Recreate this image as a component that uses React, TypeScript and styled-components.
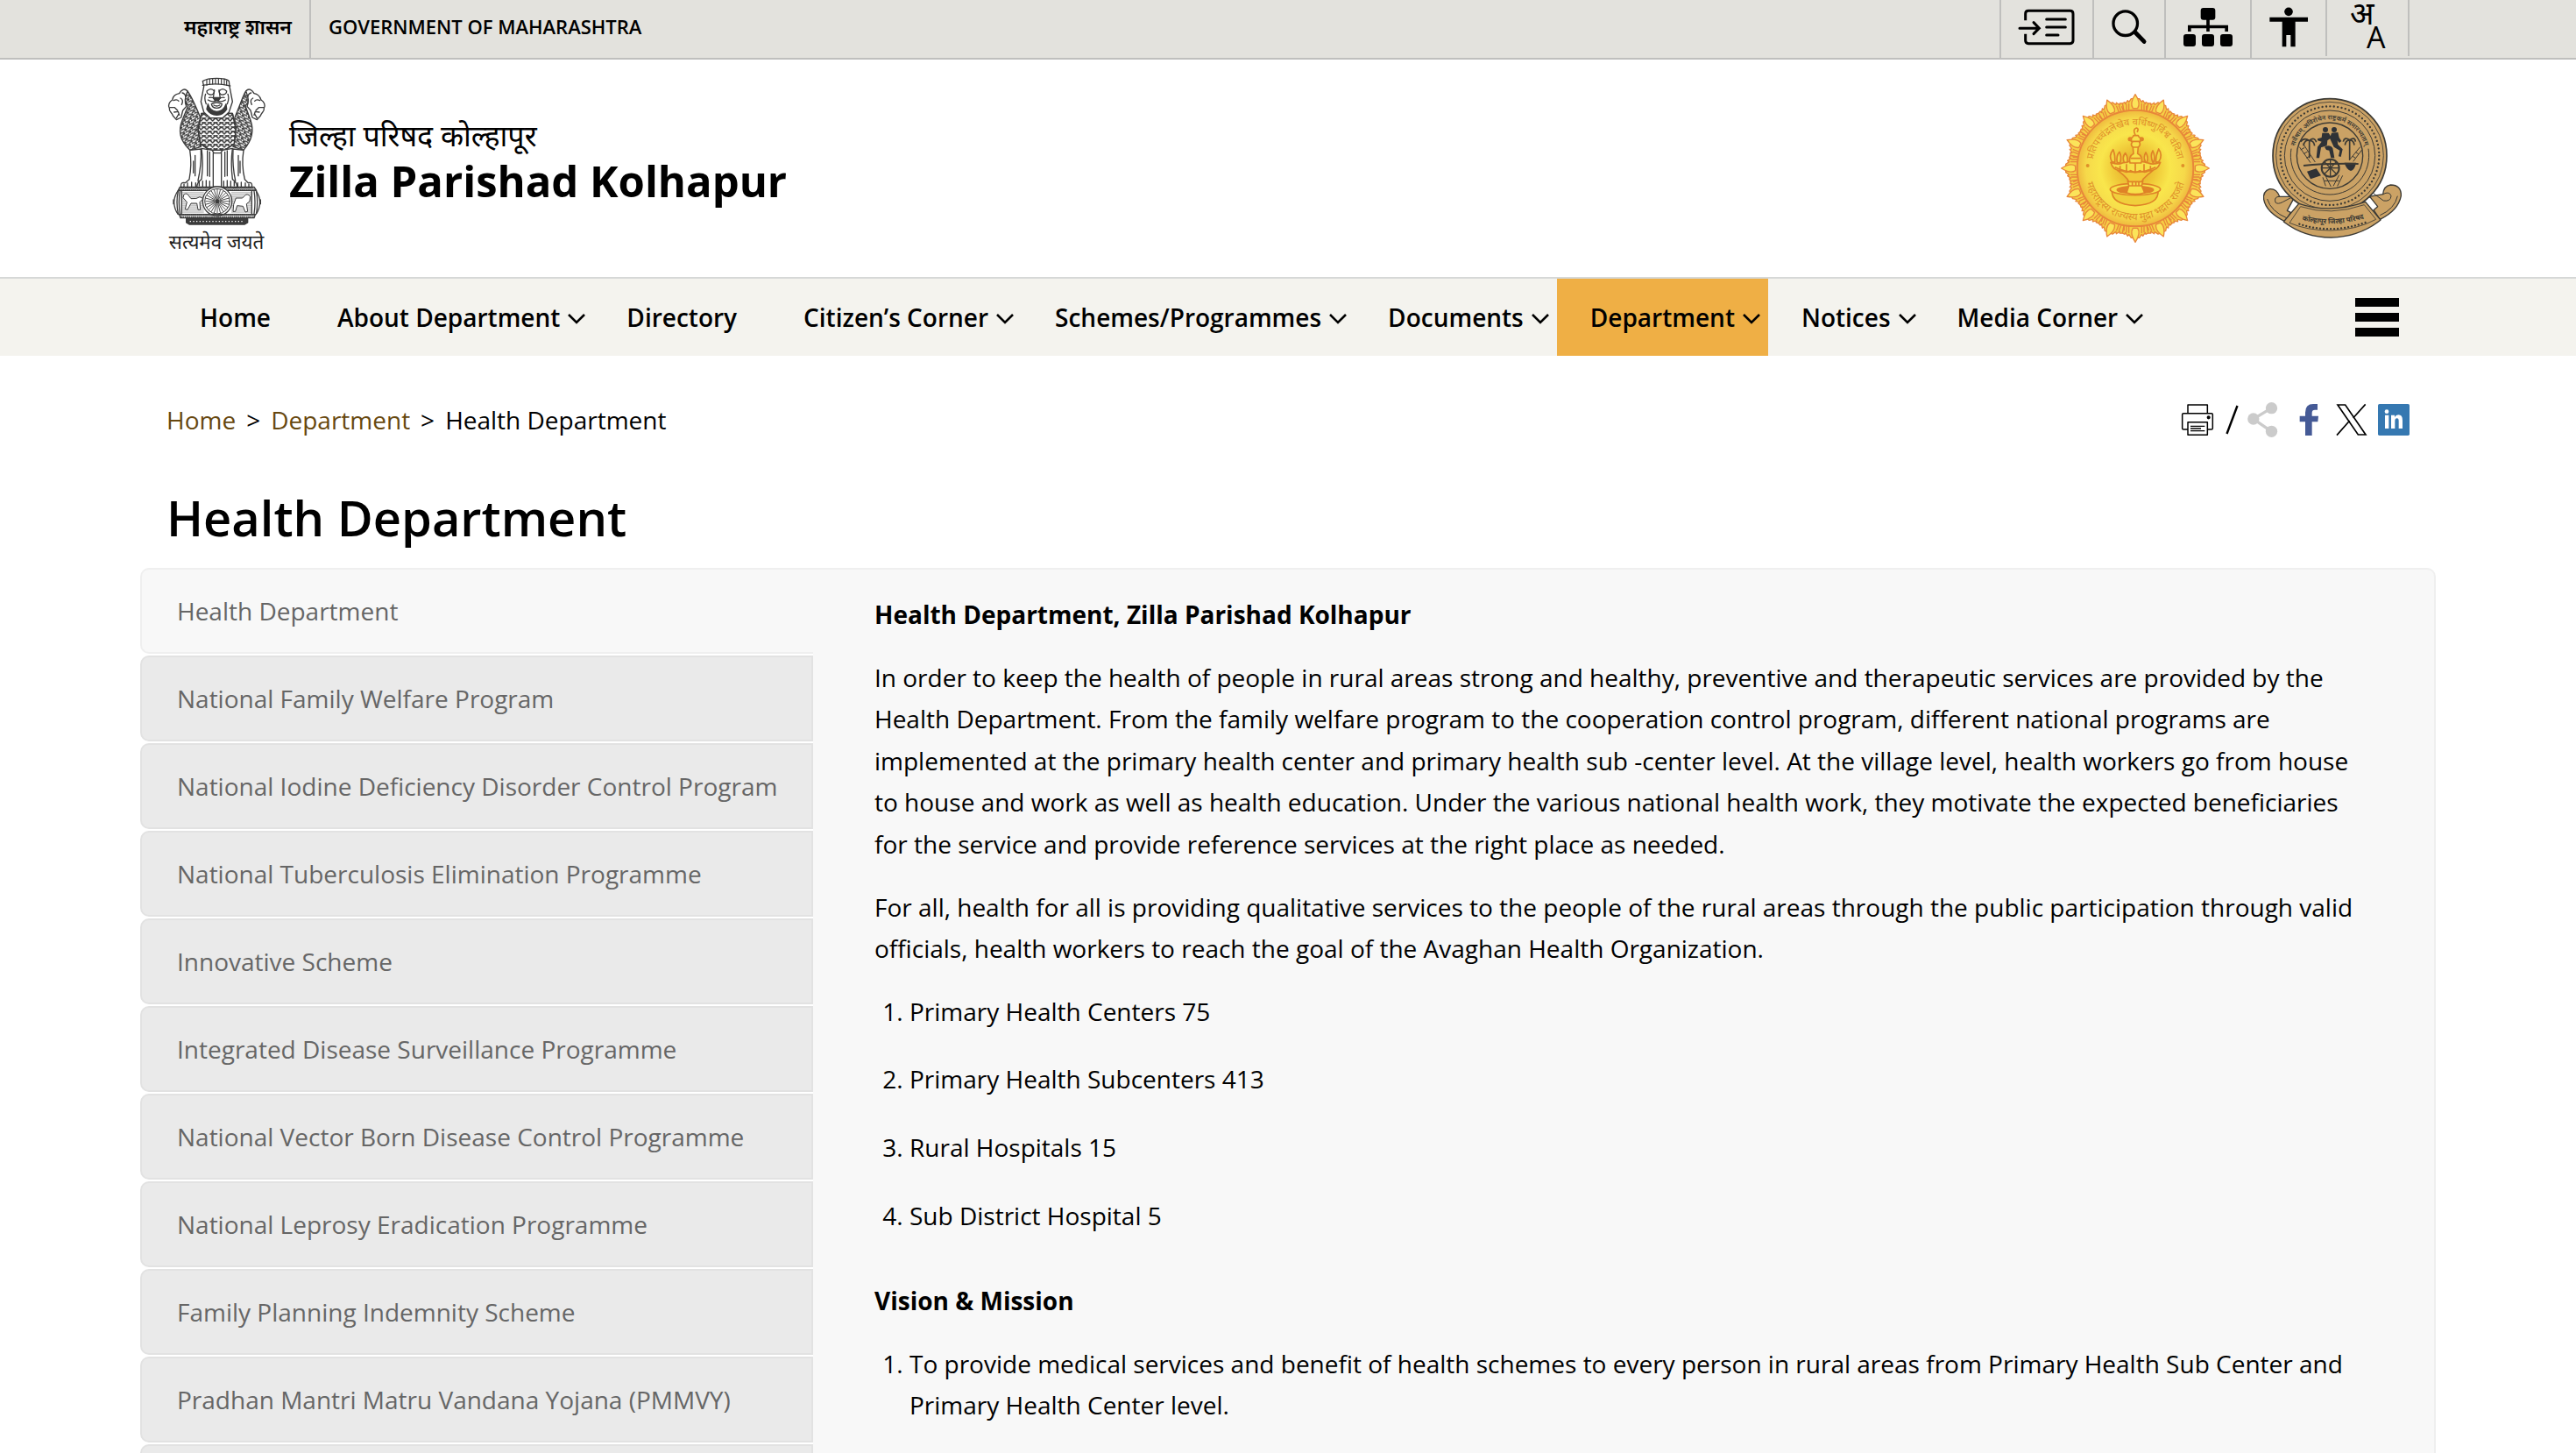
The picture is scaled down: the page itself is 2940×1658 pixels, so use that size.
import React from "react";
import styled, { createGlobalStyle, css } from "styled-components";

const GlobalStyle = createGlobalStyle`
  *, *::before, *::after { box-sizing: border-box; }
  body {
    margin: 0;
    background: #fff;
    color: #000;
    font-family: "Open Sans", "Noto Sans", sans-serif;
    font-size: 28px;
    line-height: 1.7;
  }
  a { color: inherit; text-decoration: none; }
  button { font: inherit; color: inherit; background: none; border: 0; padding: 0; cursor: pointer; }
  svg { display: block; flex: none; overflow: visible; }
`;

const Page = styled.div`
  height: 100vh;
  overflow: hidden;
`;

const Container = styled.div`
  width: 100%;
  max-width: 2620px;
  margin: 0 auto;
  padding: 0 30px;
`;

/* ---------- Top bar ---------- */

const TopBar = styled.div`
  background: #e3e2dd;
  border-bottom: 2px solid #bfbfbd;
`;

const TopRow = styled(Container)`
  display: flex;
  justify-content: space-between;
  align-items: flex-start;
`;

const TopLinks = styled.div`
  display: flex;
`;

const TopLink = styled.a`
  display: flex;
  align-items: center;
  height: 66px;
  padding: 0 20px 4px;
  font-size: 22px;
  font-weight: 600;
  &:lang(mr) { font-size: 23px; }
  & + & { border-left: 2px solid #bfbfbd; }
`;

const Tools = styled.div`
  display: flex;
`;

const Tool = styled.button<{ $short?: boolean }>`
  display: flex;
  align-items: center;
  height: ${(p) => (p.$short ? 64 : 66)}px;
  padding: 0 20px 4px;
  border-left: 2px solid #bfbfbd;
  ${(p) => p.$short && css`border-right: 2px solid #bfbfbd;`}
`;

/* ---------- Header ---------- */

const Header = styled.header`
  border-bottom: 2px solid #d6d8d7;
`;

const HeaderRow = styled(Container)`
  display: flex;
  justify-content: space-between;
  align-items: center;
  height: 248px;
`;

const Brand = styled.a`
  display: flex;
  align-items: center;
  gap: 26px;
  padding-bottom: 8px;
`;

const BrandText = styled.div`
  display: flex;
  flex-direction: column;
  padding-bottom: 12px;
`;

const BrandLocal = styled.span`
  font-size: 34px;
  line-height: 48px;
`;

const BrandName = styled.strong`
  font-size: 49px;
  line-height: 56px;
  font-weight: 700;
`;

const Seals = styled.div`
  display: flex;
  align-items: center;
  gap: 60px;
  padding-right: 8px;
`;

/* ---------- Main menu ---------- */

const MenuBar = styled.nav`
  background: #f4f3ee;
`;

const MenuRow = styled(Container)`
  display: flex;
  justify-content: space-between;
  align-items: center;
`;

const MenuList = styled.ul`
  display: flex;
  margin: 0;
  padding: 0;
  list-style: none;
`;

const MenuLink = styled.a<{ $active?: boolean; $drop?: boolean }>`
  display: flex;
  align-items: center;
  gap: 10px;
  height: 88px;
  padding: 2px ${(p) => (p.$drop ? 10 : 38)}px 0 38px;
  font-weight: 600;
  white-space: nowrap;
  background: ${(p) => (p.$active ? "#efaf45" : "transparent")};
`;

const Burger = styled.button`
  display: flex;
  flex-direction: column;
  gap: 7px;
  margin-right: 12px;
`;

const BurgerBar = styled.span`
  width: 50px;
  height: 10px;
  background: #000;
`;

/* ---------- Page heading ---------- */

const CrumbRow = styled(Container)`
  display: flex;
  justify-content: space-between;
  align-items: center;
  padding-top: 49px;
`;

const Crumbs = styled.nav`
  display: flex;
  gap: 12px;
  line-height: 48px;
`;

const CrumbLink = styled.a`
  color: #67480f;
`;

const Share = styled.div`
  display: flex;
  align-items: center;
`;

const ShareLink = styled.a`
  display: flex;
  & + & { margin-left: 12px; }
`;

const Slash = styled.span`
  display: flex;
  margin: 0 10px 0 14px;
`;

const Title = styled.h1`
  margin: 47px 0 18px;
  font-size: 56px;
  line-height: 80px;
  font-weight: 600;
`;

/* ---------- Tabs and content ---------- */

const Panel = styled.section`
  display: flex;
  width: 100%;
  max-width: 2620px;
  margin: 0 auto;
`;

const TabList = styled.div`
  display: flex;
  flex-direction: column;
  flex: none;
  width: 768px;
  gap: 2px;
`;

const Tab = styled.button<{ $active?: boolean }>`
  height: 98px;
  padding: 2px 30px 0 40px;
  text-align: left;
  white-space: nowrap;
  color: #666;
  border: 2px solid ${(p) => (p.$active ? "#efefef" : "#e2e2e2")};
  border-right-width: ${(p) => (p.$active ? 0 : 2)}px;
  border-radius: 10px 0 0 10px;
  background: ${(p) => (p.$active ? "#f8f8f8" : "#eaeaea")};
`;

const Content = styled.article`
  flex: 1;
  min-width: 0;
  padding: 28px 70px 60px;
  background: #f8f8f8;
  border: 2px solid #efefef;
  border-left: 0;
  border-radius: 0 10px 0 0;
`;

const Para = styled.p`
  margin: 0 0 24px;
`;

const NumberList = styled.ol`
  margin: 0;
  padding: 0 0 20px 40px;
`;

const NumberItem = styled.li`
  margin: 0 0 30px;
`;

/* ---------- Drawings ---------- */

const range = (n: number) => Array.from({ length: n }, (_, i) => i);
const local = '"Noto Sans Devanagari", "Noto Sans", sans-serif';

const Chevron = () => (
  <svg width="18" height="11" viewBox="0 0 18 11" fill="none" stroke="#000" strokeWidth="2.6" aria-hidden="true">
    <path d="M0 1l9 9 9-9" />
  </svg>
);

const LoginIcon = () => (
  <svg width="64" height="42" viewBox="132 29 192 126" fill="none" stroke="#000" strokeWidth="9" strokeLinecap="round" aria-hidden="true">
    <path strokeLinecap="butt" d="M155 69V46q0-10 10-10h143q10 0 10 10v92q0 10-10 10H165q-10 0-10-10v-23" />
    <path d="M135 95.500H201M183 76l19 19.500-19 19.500M227 65h65M227 92h65M227 119h40" />
  </svg>
);

const SearchIcon = () => (
  <svg width="40" height="42" viewBox="449 31 122 124" fill="none" stroke="#000" strokeLinecap="round" aria-hidden="true">
    <circle cx="497" cy="80" r="42" strokeWidth="10" />
    <path d="M532 112l30 31" strokeWidth="15" />
  </svg>
);

const SitemapIcon = () => (
  <svg width="56" height="46" viewBox="696 24 168 138" aria-hidden="true">
    <rect x="755" y="27" width="50" height="41" rx="9" />
    <path d="M716.500 108V91.500H843.500V108M780 66V108" fill="none" stroke="#000" strokeWidth="11" />
    <rect x="696" y="117" width="42" height="42" rx="9" />
    <rect x="759" y="117" width="42" height="42" rx="9" />
    <rect x="822" y="117" width="42" height="42" rx="9" />
  </svg>
);

const AccessIcon = () => (
  <svg width="44" height="46" viewBox="990 25 132 138" aria-hidden="true">
    <circle cx="1056" cy="41" r="14.500" />
    <path d="M991 60H1122V75H1079V161H1063V121H1048V161H1034V75H991Z" />
  </svg>
);

const LanguageIcon = () => (
  <svg width="52" height="56" viewBox="0 0 52 56" aria-label="Language">
    <text x="6" y="26" fontSize="36" fontFamily={local}>अ</text>
    <text x="25" y="53" fontSize="34" fontFamily='"Open Sans", sans-serif'>A</text>
  </svg>
);

const MANE = [
  "M128 150C104 92 92 70 84 60C70 52 60 64 58 78L86 110L66 160C52 196 56 226 92 262L130 250Z",
  "M246 150C270 92 276 70 284 60C298 52 308 64 310 78L282 110L300 160C312 196 306 226 276 262L240 250Z",
];

const StateEmblem = () => (
  <svg width="114" height="200" viewBox="12 12 342 600" fill="none" stroke="#3b3b3b" strokeWidth="4" strokeLinejoin="round" strokeLinecap="round" aria-label="State emblem of India">
    <defs>
      <pattern id="fur" width="20" height="15" patternUnits="userSpaceOnUse">
        <path d="M0 2l10 10 10-10M5 0v4M15 0v4" stroke="#3b3b3b" strokeWidth="4.500" fill="none" />
      </pattern>
      <pattern id="furL" width="17" height="14" patternUnits="userSpaceOnUse" patternTransform="rotate(24)">
        <path d="M0 12q4-10 16-10M10 12q1-6 7-8" stroke="#3b3b3b" strokeWidth="4.500" fill="none" />
      </pattern>
      <pattern id="furR" width="17" height="14" patternUnits="userSpaceOnUse" patternTransform="rotate(-24)">
        <path d="M17 12q-4-10-16-10M7 12q-1-6-7-8" stroke="#3b3b3b" strokeWidth="4.500" fill="none" />
      </pattern>
      <pattern id="weave" width="7" height="7" patternUnits="userSpaceOnUse">
        <path d="M0 0l7 7M7 0l-7 7" stroke="#3b3b3b" strokeWidth="2" />
      </pattern>
      <pattern id="lines" width="8" height="5" patternUnits="userSpaceOnUse">
        <path d="M0 2h8" stroke="#666" strokeWidth="1.500" />
      </pattern>
    </defs>
    {/* outer lions */}
    <path d={MANE[0]} fill="url(#furL)" />
    <path d={MANE[1]} fill="url(#furR)" />
    <path fill="#fff" d="M84 60C74 48 62 56 56 68C42 70 34 78 32 90C22 96 16 108 22 118C20 130 30 132 34 144L46 158L62 150L68 126L80 112C74 96 74 84 84 60Z" />
    <path fill="#fff" d="M284 60C294 48 306 56 312 68C326 70 332 78 336 90C346 96 352 108 346 118C348 130 338 132 334 144L322 158L306 150L300 126L288 112C294 96 294 84 284 60Z" />
    <path d="M36 92q12-6 18 2M24 116l16 0 10 10M38 132l14-2 4 12M60 84q12 6 4 22M66 66q10 2 12 14M46 152l8-14" />
    <path d="M332 92q-12-6-18 2M344 116l-16 0-10 10M330 132l-14-2-4 12M308 84q-12 6-4 22M302 66q-10 2-12 14M322 152l-8-14" />
    {/* centre chest */}
    <path d="M132 136L120 190L128 240L160 262H212L244 240L250 190L238 136Z" fill="#fff" />
    <path d="M132 136L120 190L128 240L160 262H212L244 240L250 190L238 136Z" fill="url(#fur)" />
    {/* legs */}
    <path fill="#fff" d="M92 262C98 300 96 330 90 362L76 374Q58 370 62 390H128L120 366C128 330 132 300 130 258Z" />
    <path fill="#fff" d="M276 262C270 300 272 330 280 362L292 374Q308 370 304 390H240L248 366C240 330 238 300 240 258Z" />
    <path fill="#fff" d="M132 256C138 300 136 330 132 362Q116 372 116 390H176V274L168 262Z" />
    <path fill="#fff" d="M238 256C232 300 234 330 238 362Q254 372 254 390H196V274L204 262Z" />
    <path fill="#fff" d="M172 272H200V388H172Z" />
    <path d="M152 264V350M160 268V352M220 264V350M212 268V352M110 280V350M258 280V350M104 300V340M264 300V340M124 384v-14M136 386v-18M148 386v-20M160 386v-18M208 386v-18M220 386v-20M232 386v-18M244 384v-14M72 388v-10M84 388v-14M98 388v-16M112 388v-14M294 388v-10M282 388v-14M268 388v-16M256 388v-14" />
    {/* centre head */}
    <path fill="#fff" d="M136 26Q150 16 184 16Q218 16 226 26L228 44L238 96L226 132L204 152H162L140 132L130 96L140 44Z" />
    <path d="M150 22v18M160 19v18M170 18v18M180 17v18M190 17v18M200 18v18M210 20v18M218 24v16" strokeWidth="3.500" />
    <path d="M136 40Q182 30 230 42M150 60q14-14 26 0q-2 14-14 12q-12-2-12-12M218 60q-14-14-26 0q2 14 14 12q12-2 12-12" />
    <path d="M176 56L172 84Q184 96 196 84L192 56M154 90Q170 100 184 92Q198 100 214 90M158 82Q170 80 176 86M210 82Q200 80 194 86M146 70q-6 16 2 34M222 70q6 16-2 34" />
    <path fill="#3b3b3b" d="M172 82h24l-6 10h-12ZM154 104Q160 128 184 130Q208 128 216 104L218 122Q206 142 184 142Q162 142 150 122Z" />
    <path d="M166 104q18-10 36 0q-2 14-18 14t-18-14M174 108q10 6 20 0" />
    {/* abacus */}
    <path d="M58 388H312L320 400H52Z" fill="url(#weave)" />
    <path d="M52 400H318Q332 420 332 440Q332 462 318 482H52Q38 462 38 440Q38 420 52 400Z" fill="#fff" />
    <path d="M64 404H140V478H64ZM234 404H304V478H234Z" fill="url(#lines)" stroke="none" />
    <path d="M52 402Q44 440 52 480M58 402Q52 440 58 480M64 402V480M304 402V480M312 402Q318 440 312 480M320 404Q326 440 320 478M36 432v14M334 432v14" />
    <path fill="#fff" strokeWidth="3" d="M72 414q10-8 16 4l8 10q20 2 30-6l12 6-12 12 2 26h-8l-4-22-20 0-12 22-8-2 6-24-12-14Z" />
    <path fill="#fff" strokeWidth="3" d="M298 420q-10-12-18-2l-8 8-22 0-8 22-2 24h8l6-20 20 2 8 20 8-2-4-26 10-8Z" />
    <circle cx="186" cy="437" r="50" fill="#fff" />
    <circle cx="186" cy="437" r="43" strokeWidth="3" />
    {range(24).map((i) => (
      <path key={i} d="M186 427V397" strokeWidth="2.500" transform={`rotate(${i * 15} 186 437)`} />
    ))}
    <circle cx="186" cy="437" r="6" fill="#3b3b3b" />
    <path d="M56 482H316L312 494H60Z" fill="url(#weave)" />
    <path d="M80 496H290V510L280 516H90L80 510Z" fill="#3b3b3b" />
    <path d="M92 506H278" stroke="#fff" strokeWidth="4" strokeDasharray="4 7" strokeLinecap="butt" />
    <text x="183" y="599" textAnchor="middle" fontSize="67" fontFamily={local} fill="#222" stroke="none">सत्यमेव जयते</text>
  </svg>
);

const StateSeal = () => (
  <svg width="170" height="170" viewBox="-255 -255 510 510" fill="none" stroke="#e8873a" strokeWidth="4" strokeLinejoin="round" aria-label="Seal of Maharashtra">
    <defs>
      <radialGradient id="gold">
        <stop offset="0" stopColor="#dfa32a" />
        <stop offset="0.350" stopColor="#efc737" />
        <stop offset="0.600" stopColor="#f9e64c" />
        <stop offset="0.850" stopColor="#f6d94a" />
        <stop offset="1" stopColor="#efb93e" />
      </radialGradient>
      <path id="sealTop" d="M-148 0A148 148 0 0 1 148 0" />
      <path id="sealBottom" d="M-174 4A174 174 0 0 0 174 4" />
    </defs>
    {range(16).map((i) => (
      <g key={i} transform={`rotate(${i * 22.5})`}>
        <path fill="#f5cf45" d="M-38 -190L-44 -222L-36 -226L-34 -220L-26 -232L-22 -226L-14 -238H14L22 -226L26 -232L34 -220L36 -226L44 -222L38 -190Z" />
        <path d="M-30 -196L-30 -220M-22 -196L-22 -222M30 -196L30 -220M22 -196L22 -222M38 -196V-214" />
        <path fill="#fbe45a" d="M0 -253Q-20 -222 -8 -205H8Q20 -222 0 -253Z" />
      </g>
    ))}
    <circle r="199" fill="url(#gold)" strokeWidth="6" />
    <g fill="#e0902a" stroke="none" fontFamily={local}>
      <text fontSize="33"><textPath href="#sealTop" startOffset="50%" textAnchor="middle">प्रतिपच्चंद्रलेखेव वर्धिष्णुर्विश्व वंदिता</textPath></text>
      <text fontSize="35"><textPath href="#sealBottom" startOffset="50%" textAnchor="middle">महाराष्ट्रस्य राज्यस्य मुद्रा भद्राय राजते</textPath></text>
      <circle cx="-163" cy="-9" r="6" />
      <circle cx="163" cy="-9" r="6" />
    </g>
    {/* lamp */}
    <g stroke="#df8327" strokeWidth="5">
      <path fill="#f0cf3c" d="M-80 76Q-82 124 0 128Q82 124 78 76Z" />
      <ellipse cy="72" rx="86" ry="20" fill="#f7e04a" />
      <ellipse cy="74" rx="62" ry="12" fill="#df8327" />
      <path fill="#f7e04a" d="M-30 84L-22 60L-26 44H26L22 60L32 84Q0 94 -30 84Z" />
      <path d="M-22 60H22M-10 46V60M2 46V60M12 46V60" />
      <path fill="#f3c93a" d="M-60 8Q-40 22 -28 36L-22 46H22L28 36Q42 22 60 8Z" />
      <path fill="#f7e04a" d="M-84 -20Q-76 10 -46 8Q-30 18 -16 8Q0 20 16 8Q32 18 46 8Q76 10 86 -20Q60 -10 44 -18Q20 -28 0 -18Q-20 -28 -44 -18Q-60 -10 -84 -20Z" />
      <path d="M-70 -4Q0 30 70 -4M-30 -14V12M30 -14V12M-52 -8v14M52 -8v14M0 -16v28" />
      <path fill="#f3d844" d="M-80 -22Q-92 -44 -76 -64Q-68 -44 -70 -20ZM-62 -20Q-66 -44 -54 -56Q-46 -40 -52 -18ZM-38 -20Q-46 -38 -34 -52Q-24 -38 -28 -20ZM80 -22Q96 -44 80 -66Q70 -44 70 -20ZM60 -20Q50 -44 60 -60Q70 -40 62 -18ZM36 -20Q26 -38 36 -54Q46 -38 40 -20Z" />
      <path fill="#f7e04a" d="M-18 -18Q-24 -40 -6 -50L-8 -72Q-18 -80 -10 -90L-22 -100Q-8 -104 -6 -112H10Q12 -104 26 -100L14 -90Q20 -80 10 -72L8 -50Q28 -40 20 -18Z" />
      <path d="M-8 -72H10M-14 -92H16M-16 -34H18M0 -114Q-10 -134 4 -138Q14 -136 6 -124" />
      <circle cx="-18" cy="-100" r="5" /><circle cx="22" cy="-100" r="5" />
    </g>
  </svg>
);

const DistrictSeal = () => (
  <svg width="160" height="162" viewBox="787 92 480 486" fill="none" stroke="#3c3a34" strokeWidth="4" strokeLinejoin="round" aria-label="Seal of Zilla Parishad Kolhapur">
    <defs>
      <path id="zpTop" d="M894 292A124 124 0 0 1 1142 292" />
      <path id="zpRibbon" d="M908 508Q1024 544 1150 502" />
    </defs>
    {/* scroll ends */}
    <path fill="#cba265" d="M900 432L846 432Q836 404 812 406Q788 414 792 442Q800 486 866 518L884 486L872 480L896 436Z" />
    <path fill="#cba265" d="M1152 432L1200 424Q1202 396 1226 392Q1264 392 1262 430Q1252 480 1190 510L1168 478L1182 466L1158 436Z" />
    <path d="M846 432Q826 432 832 452Q840 460 858 450L892 432M1200 424Q1222 412 1228 430Q1226 450 1202 446L1166 420M804 440Q816 482 872 506M1250 430Q1240 474 1190 496" strokeWidth="3" />
    <circle cx="1018" cy="292" r="195" fill="#cba265" strokeWidth="5" />
    <circle cx="1018" cy="292" r="184" strokeWidth="2.500" />
    <circle cx="1018" cy="292" r="169" strokeWidth="7" strokeLinecap="round" strokeDasharray="0.100 13.170" />
    <circle cx="1018" cy="292" r="155" strokeWidth="3" />
    <circle cx="1018" cy="292" r="113" />
    <path d="M886 268A134 134 0 1 0 1150 268" strokeWidth="3" />
    <text fontSize="22" fontWeight="600" fontFamily={local} fill="#3c3a34" stroke="none">
      <textPath href="#zpTop" startOffset="50%" textAnchor="middle">सर्वेषाम् अविरोधेन राष्ट्रकर्म समारभ्यताम्</textPath>
    </text>
    {/* ribbon */}
    <path fill="#cba265" d="M912 456Q1020 492 1140 450L1192 512Q1120 570 1022 572Q930 572 860 518Z" />
    <path d="M918 466Q1020 500 1136 460L1176 510Q1110 546 1022 548Q940 548 880 522Z" strokeWidth="2.500" />
    <path d="M914 526Q1024 562 1142 520" strokeWidth="7" strokeLinecap="round" strokeDasharray="0.100 12" />
    <text fontSize="24" fontWeight="700" fontFamily={local} fill="#3c3a34" stroke="none">
      <textPath href="#zpRibbon" startOffset="50%" textAnchor="middle">कोल्हापूर जिल्हा परिषद</textPath>
    </text>
    {/* wrestlers */}
    <g fill="#2f3236" stroke="none">
      <circle cx="1003" cy="203" r="9" /><circle cx="1033" cy="203" r="9" />
      <path d="M992 214L1014 214L1024 230L1010 240L1008 258L988 264L982 300H972L976 262L990 244L976 240V234L990 230Z" />
      <path d="M1024 214L1046 212L1050 230L1058 242L1050 248L1044 240L1046 254L1062 270L1056 296L1048 294L1052 274L1032 262L1018 232Z" />
      <path d="M1000 262Q1020 252 1028 266L1034 300H1022L1016 274L1006 272Z" />
      <path d="M940 346L972 336L988 360L952 372ZM1068 316H1108Q1104 340 1090 344Q1074 338 1068 316Z" />
    </g>
    {/* palms and tracks */}
    <path strokeWidth="5" d="M948 240V300M1086 240V306M948 240Q930 228 918 244M948 240Q966 226 972 246M948 240Q932 236 928 258M948 240Q964 240 966 258M1086 238Q1068 226 1064 244M1086 238Q1104 226 1106 244M1086 238Q1072 240 1070 256M1086 238Q1100 240 1102 256" />
    <path strokeWidth="3" d="M914 262L952 316M926 250L968 314M918 272l14-8M928 286l14-8M938 300l14-8M1098 312L1128 272M1084 308L1122 262M1106 300l-10-6M1116 286l-10-6M994 366L1004 396M1062 360L1044 396M1004 362L1022 398M1050 358L1030 396M1000 378h50" />
    {/* plough and wheel */}
    <path strokeWidth="6" d="M928 326Q1000 318 1116 320" />
    <circle cx="1020" cy="334" r="30" strokeWidth="6" />
    {range(4).map((i) => (
      <path key={i} d="M990 334H1050" strokeWidth="4" transform={`rotate(${i * 45} 1020 334)`} />
    ))}
  </svg>
);

const PrintIcon = () => (
  <svg width="36" height="36" viewBox="0 0 108 108" fill="none" stroke="#000" strokeWidth="4.500" strokeLinejoin="round" aria-hidden="true">
    <path d="M21 32V3H88V32M20 87H6Q2 87 2 83V36Q2 32 6 32H102Q106 32 106 36V83Q106 87 102 87H88M21 62H88V106H21Z" />
    <path d="M30 76H79M30 84H66M30 92H79" strokeWidth="4" />
    <circle cx="92" cy="46" r="4" fill="#000" />
  </svg>
);

const SlashIcon = () => (
  <svg width="15" height="36" viewBox="0 0 15 36" stroke="#000" strokeWidth="2.400" aria-hidden="true">
    <path d="M1.500 34L13.500 2" />
  </svg>
);

const ShareIcon = () => (
  <svg width="35" height="40" viewBox="375 90 104 120" fill="#cbcbcb" aria-hidden="true">
    <path d="M457 110L395 147L457 190" fill="none" stroke="#cbcbcb" strokeWidth="10" />
    <circle cx="395" cy="147" r="20" /><circle cx="457" cy="110" r="20" /><circle cx="457" cy="190" r="20" />
  </svg>
);

const FacebookIcon = () => (
  <svg width="42" height="36" viewBox="516 93 126 108" aria-hidden="true">
    <path fill="#455a96" d="M573 201V154H554V134H573V122Q573 93 600 93H615V113H606Q596 113 596 123V134H618L616 154H596V201Z" />
  </svg>
);

const XIcon = () => (
  <svg width="36" height="36" viewBox="679 93 106 108" fill="none" stroke="#000" strokeWidth="5" aria-hidden="true">
    <path d="M684 96H710L780 198H754ZM779 94L737 141M681 200L725 150" />
  </svg>
);

const LinkedInIcon = () => (
  <svg width="36" height="36" viewBox="822 93 108 108" aria-hidden="true">
    <rect x="822" y="93" width="108" height="108" rx="5" fill="#3578b1" />
    <g fill="#fff">
      <circle cx="852" cy="119" r="7" />
      <path d="M846 131H859V177H846ZM867 131H879V138Q883 130 892 130Q906 130 906 149V177H893V152Q893 142 887 142Q880 142 880 152V177H867Z" />
    </g>
  </svg>
);

/* ---------- Data ---------- */

const MENU = [
  { label: "Home" },
  { label: "About Department", drop: true },
  { label: "Directory" },
  { label: "Citizen’s Corner", drop: true },
  { label: "Schemes/Programmes", drop: true },
  { label: "Documents", drop: true },
  { label: "Department", drop: true, active: true },
  { label: "Notices", drop: true },
  { label: "Media Corner", drop: true },
];

const TABS = [
  "Health Department",
  "National Family Welfare Program",
  "National Iodine Deficiency Disorder Control Program",
  "National Tuberculosis Elimination Programme",
  "Innovative Scheme",
  "Integrated Disease Surveillance Programme",
  "National Vector Born Disease Control Programme",
  "National Leprosy Eradication Programme",
  "Family Planning Indemnity Scheme",
  "Pradhan Mantri Matru Vandana Yojana (PMMVY)",
  "",
];

const FACILITIES = [
  "Primary Health Centers 75",
  "Primary Health Subcenters 413",
  "Rural Hospitals 15",
  "Sub District Hospital 5",
];

export default function App() {
  return (
    <Page>
      <GlobalStyle />
      <TopBar>
        <TopRow>
          <TopLinks>
            <TopLink href="#" lang="mr">महाराष्ट्र शासन</TopLink>
            <TopLink href="#">GOVERNMENT OF MAHARASHTRA</TopLink>
          </TopLinks>
          <Tools>
            <Tool aria-label="Skip to main content"><LoginIcon /></Tool>
            <Tool aria-label="Search"><SearchIcon /></Tool>
            <Tool aria-label="Site map"><SitemapIcon /></Tool>
            <Tool aria-label="Accessibility"><AccessIcon /></Tool>
            <Tool $short aria-label="Language"><LanguageIcon /></Tool>
          </Tools>
        </TopRow>
      </TopBar>

      <Header>
        <HeaderRow>
          <Brand href="#">
            <StateEmblem />
            <BrandText>
              <BrandLocal lang="mr">जिल्हा परिषद कोल्हापूर</BrandLocal>
              <BrandName>Zilla Parishad Kolhapur</BrandName>
            </BrandText>
          </Brand>
          <Seals>
            <StateSeal />
            <DistrictSeal />
          </Seals>
        </HeaderRow>
      </Header>

      <MenuBar aria-label="Main">
        <MenuRow>
          <MenuList>
            {MENU.map((item) => (
              <li key={item.label}>
                <MenuLink href="#" $active={item.active} $drop={item.drop}>
                  {item.label}
                  {item.drop && <Chevron />}
                </MenuLink>
              </li>
            ))}
          </MenuList>
          <Burger aria-label="More">
            <BurgerBar />
            <BurgerBar />
            <BurgerBar />
          </Burger>
        </MenuRow>
      </MenuBar>

      <main>
        <CrumbRow>
          <Crumbs aria-label="Breadcrumb">
            <CrumbLink href="#">Home</CrumbLink>
            <span>&gt;</span>
            <CrumbLink href="#">Department</CrumbLink>
            <span>&gt;</span>
            <span>Health Department</span>
          </Crumbs>
          <Share>
            <ShareLink href="#" aria-label="Print"><PrintIcon /></ShareLink>
            <Slash><SlashIcon /></Slash>
            <ShareLink href="#" aria-label="Share"><ShareIcon /></ShareLink>
            <ShareLink href="#" aria-label="Facebook"><FacebookIcon /></ShareLink>
            <ShareLink href="#" aria-label="X"><XIcon /></ShareLink>
            <ShareLink href="#" aria-label="LinkedIn"><LinkedInIcon /></ShareLink>
          </Share>
        </CrumbRow>
        <Container>
          <Title>Health Department</Title>
        </Container>
        <Panel>
          <TabList role="tablist">
            {TABS.map((name, i) => (
              <Tab key={i} role="tab" $active={i === 0} aria-selected={i === 0}>
                {name}
              </Tab>
            ))}
          </TabList>
          <Content>
            <Para><strong>Health Department, Zilla Parishad Kolhapur</strong></Para>
            <Para>
              In order to keep the health of people in rural areas strong and healthy, preventive and
              therapeutic services are provided by the Health Department. From the family welfare
              program to the cooperation control program, different national programs are implemented
              at the primary health center and primary health sub -center level. At the village level,
              health workers go from house to house and work as well as health education. Under the
              various national health work, they motivate the expected beneficiaries for the service
              and provide reference services at the right place as needed.
            </Para>
            <Para>
              For all, health for all is providing qualitative services to the people of the rural
              areas through the public participation through valid officials, health workers to reach
              the goal of the Avaghan Health Organization.
            </Para>
            <NumberList>
              {FACILITIES.map((name) => (
                <NumberItem key={name}>{name}</NumberItem>
              ))}
            </NumberList>
            <Para><strong>Vision &amp; Mission</strong></Para>
            <NumberList>
              <NumberItem>
                To provide medical services and benefit of health schemes to every person in rural
                areas from Primary Health Sub Center and Primary Health Center level.
              </NumberItem>
            </NumberList>
          </Content>
        </Panel>
      </main>
    </Page>
  );
}
